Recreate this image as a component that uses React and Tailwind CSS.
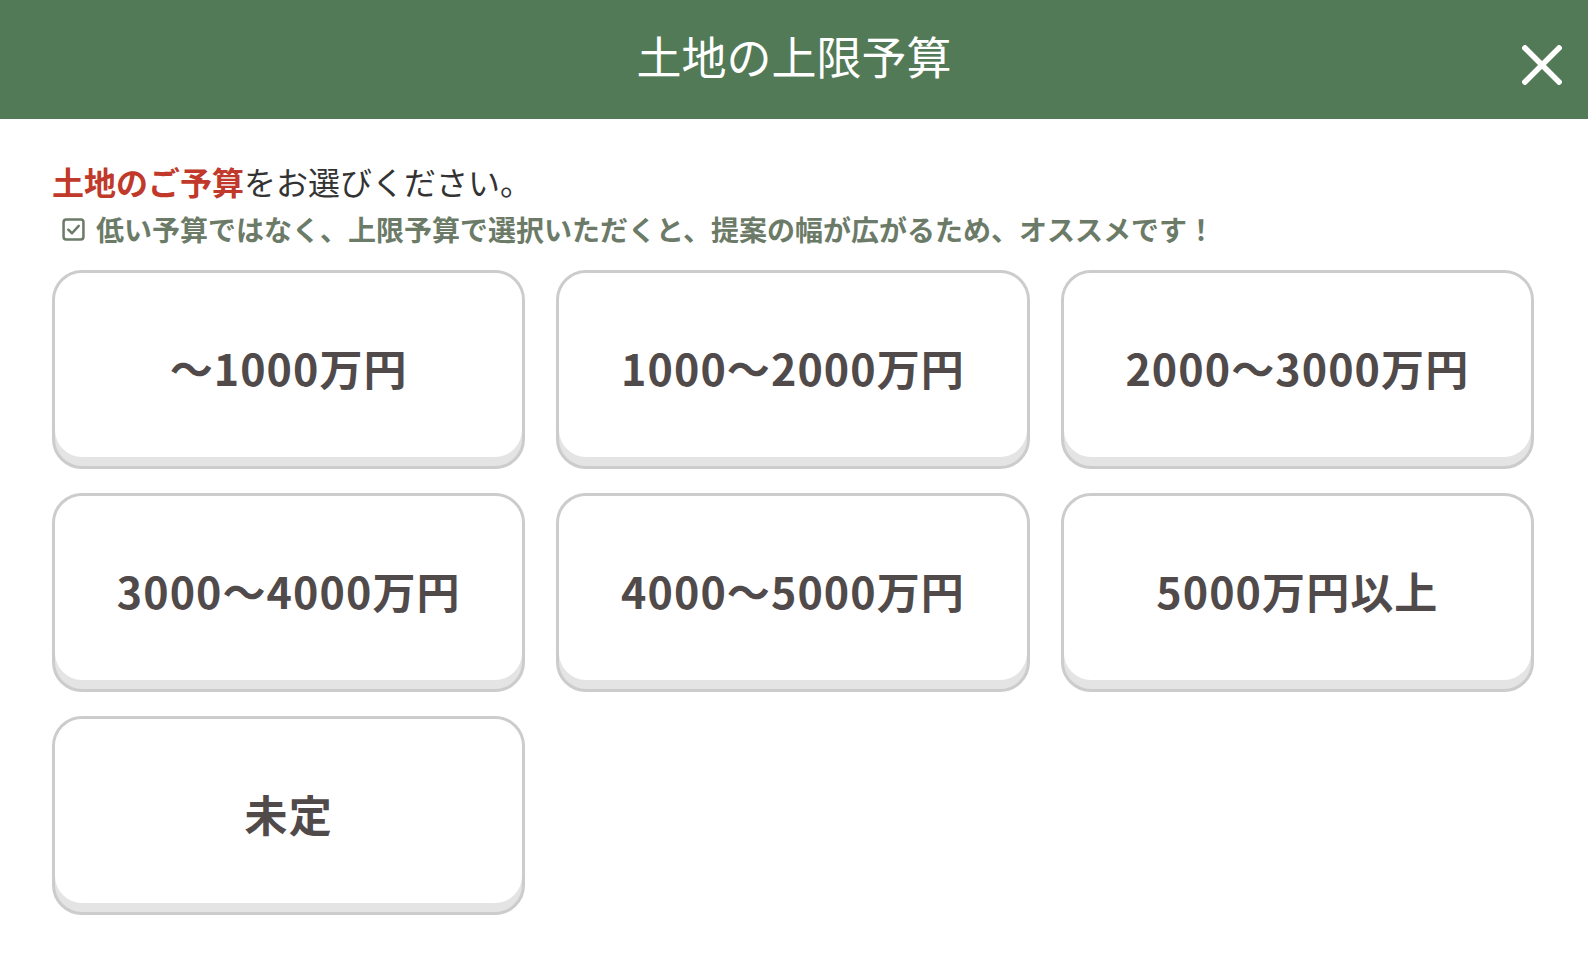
import React from "react";

const FONT = { fontFamily: '"Noto Sans CJK JP", "Noto Sans", sans-serif' };

const options = [
  "～1000万円",
  "1000～2000万円",
  "2000～3000万円",
  "3000～4000万円",
  "4000～5000万円",
  "5000万円以上",
  "未定",
];

function CheckIcon() {
  return (
    <svg width="23" height="23" viewBox="0 0 22 22" className="shrink-0">
      <rect x="1.5" y="1.5" width="19" height="19" rx="2.5" fill="none" stroke="#6b7b68" strokeWidth="2.4" />
      <path d="M6 11.2 L9.6 14.6 L16 7.6" fill="none" stroke="#6b7b68" strokeWidth="2.4" strokeLinecap="round" strokeLinejoin="round" />
    </svg>
  );
}

function Card({ label }) {
  return (
    <button
      type="button"
      className="h-[199px] rounded-[30px] border-[3px] border-[#cccccc] bg-[#e4e4e4] overflow-hidden flex flex-col p-0"
    >
      <div className="flex-1 mb-[9px] bg-white rounded-b-[27px] flex items-center justify-center">
        <span className="text-[43px] font-bold text-[#514a4a] leading-none tracking-[0.025em] mt-[4px]">{label}</span>
      </div>
    </button>
  );
}

export default function App() {
  return (
    <div className="w-[1588px] h-[970px] bg-white overflow-hidden" style={FONT}>
      <header className="relative h-[119px] bg-[#537a57] flex items-center justify-center">
        <h1 className="text-[45px] font-normal text-white leading-none -mt-[8px]">土地の上限予算</h1>
        <button type="button" className="absolute right-[26px] top-[45px] w-[40px] h-[40px]" aria-label="閉じる">
          <svg width="40" height="40" viewBox="0 0 40 40">
            <path d="M3 3 L37 37 M37 3 L3 37" stroke="white" strokeWidth="5.5" strokeLinecap="square" />
          </svg>
        </button>
      </header>

      <main className="pl-[52px] pr-[54px] pt-[42px]">
        <p className="text-[32px] leading-[40px] text-[#333333]">
          <span className="font-bold text-[#c0392b]">土地のご予算</span>をお選びください。
        </p>
        <p className="mt-[10px] pl-[10px] flex items-center gap-[11px] text-[28px] leading-[36px] font-bold text-[#6b7b68]">
          <CheckIcon />
          <span>低い予算ではなく、上限予算で選択いただくと、提案の幅が広がるため、オススメです！</span>
        </p>

        <div className="mt-[23px] grid grid-cols-3 gap-x-[31px] gap-y-[24px]">
          {options.map((o) => (
            <Card key={o} label={o} />
          ))}
        </div>
      </main>
    </div>
  );
}
